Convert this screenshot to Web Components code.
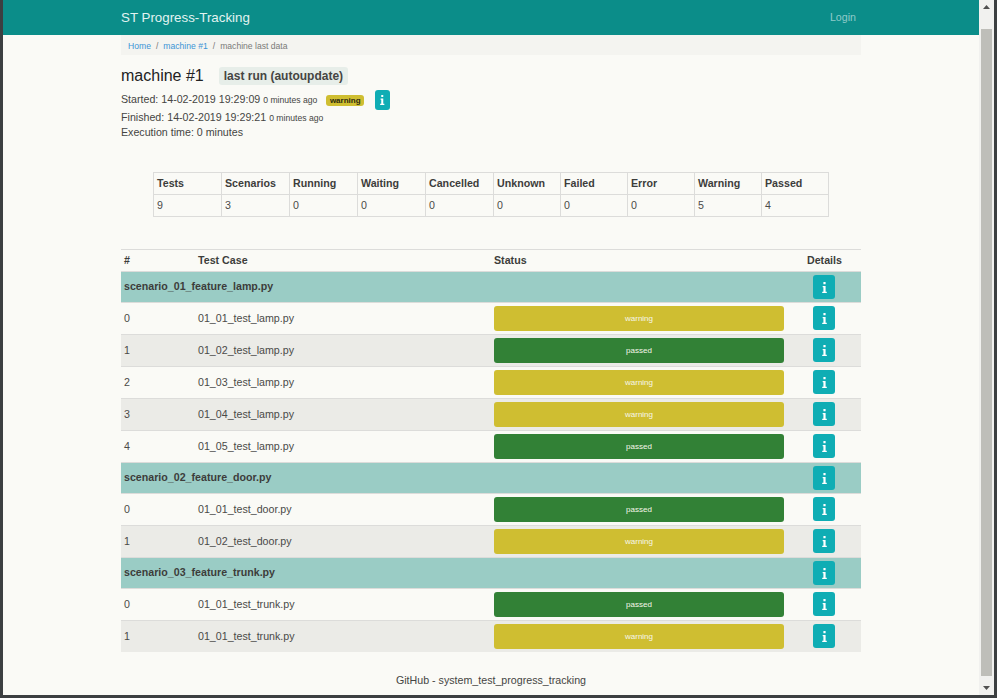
<!DOCTYPE html>
<html>
<head>
<meta charset="utf-8">
<title>ST Progress-Tracking</title>
<style>
html, body { margin: 0; height: 100%; overflow: hidden; }
body { background: #3c3f41; font-family: "Liberation Sans", Arial, sans-serif; color: #3a3a38; }
</style>
</head>
<body>
<st-window>
	<st-navbar brand="ST Progress-Tracking" login="Login"></st-navbar>
	<st-container>
		<st-breadcrumb></st-breadcrumb>
		<st-run-header></st-run-header>
		<st-summary></st-summary>
		<st-results></st-results>
		<st-footer>GitHub - system_test_progress_tracking</st-footer>
	</st-container>
</st-window>
<script>
const INFO_ICON = `<svg viewBox="0 0 5 12" aria-hidden="true"><path fill="#fff" d="M1.3 0h2.4v2.5H1.3zM.5 4.3h3.2v6.3H5V12H0v-1.4h1.3V5.7H.5z"/></svg>`;

class StWindow extends HTMLElement {
	constructor() {
		super();
		this.attachShadow({ mode: 'open' }).innerHTML = `<style>
:host { display: flex; height: 695px; margin: 0 3px; background: #fafaf6; }
main { flex: 1; min-width: 0; overflow: hidden; }
st-scrollbar { flex: none; }
</style><main><slot></slot></main><st-scrollbar></st-scrollbar>`;
	}
}

class StScrollbar extends HTMLElement {
	constructor() {
		super();
		this.attachShadow({ mode: 'open' }).innerHTML = `<style>
:host { display: flex; flex-direction: column; width: 15px; background: #f1f1ef; }
.arrow { height: 14px; display: flex; align-items: center; justify-content: center; }
.track { flex: 1; display: flex; padding: 15px 2px 5px; }
.thumb { flex: 1; background: #bebeb9; }
svg { display: block; }
</style>
<div class="arrow"><svg width="7" height="4"><path d="M3.5 0L7 4H0z" fill="#505050"/></svg></div>
<div class="track"><div class="thumb"></div></div>
<div class="arrow"><svg width="7" height="4"><path d="M0 0h7L3.5 4z" fill="#505050"/></svg></div>`;
	}
}

class StNavbar extends HTMLElement {
	constructor() {
		super();
		this.attachShadow({ mode: 'open' }).innerHTML = `<style>
:host { display: block; background: #0b8d89; height: 35px; }
nav { width: 740px; height: 100%; margin: 0 auto; display: flex; justify-content: space-between; align-items: center; }
.brand { font-size: 13.333px; color: #e2f3f1; }
.login { font-size: 10.667px; color: #8fcbc9; margin-right: 5px; padding-bottom: 2px; }
</style><nav><span class="brand"></span><span class="login"></span></nav>`;
		this.shadowRoot.querySelector('.brand').textContent = this.getAttribute('brand');
		this.shadowRoot.querySelector('.login').textContent = this.getAttribute('login');
	}
}

class StContainer extends HTMLElement {
	constructor() {
		super();
		this.attachShadow({ mode: 'open' }).innerHTML = `<style>
:host { display: block; width: 740px; margin: 0 auto; }
</style><slot></slot>`;
	}
}

class StBreadcrumb extends HTMLElement {
	constructor() {
		super();
		this.attachShadow({ mode: 'open' }).innerHTML = `<style>
:host { display: flex; align-items: center; box-sizing: border-box; height: 20px; padding: 1px 0 0 7px; background: #f4f4f0; font-size: 8.6px; color: #7a7a78; }
a { color: #3c94d6; text-decoration: none; }
i { font-style: normal; margin: 0 5px; }
</style><a>Home</a><i>/</i><a>machine #1</a><i>/</i><span>machine last data</span>`;
	}
}

class StInfoButton extends HTMLElement {
	constructor() {
		super();
		this.attachShadow({ mode: 'open' }).innerHTML = `<style>
:host { display: inline-flex; align-items: center; justify-content: center; width: 22px; height: 24px; background: #0fadb4; border-radius: 3px; }
:host([small]) { width: 15px; height: 20px; }
svg { display: block; width: 5px; height: 11px; }
:host([small]) svg { height: 10px; width: 4.5px; }
</style>${INFO_ICON}`;
	}
}

class StRunHeader extends HTMLElement {
	constructor() {
		super();
		this.attachShadow({ mode: 'open' }).innerHTML = `<style>
:host { display: block; font-size: 10.667px; color: #454543; height: 117px; }
.title { display: flex; align-items: center; padding-top: 12px; height: 18px; }
h1 { font-size: 16px; font-weight: 400; margin: 0 15px 0 0; color: #222; line-height: 18px; }
.tag { background: #e7eee9; border-radius: 3px; padding: 0 5px; font-size: 12px; font-weight: 700; line-height: 18px; color: #454543; }
.line { display: flex; align-items: center; height: 15px; }
.first { margin: 5px 0 -1px; height: 20px; align-items: flex-start; }
.first .txt { margin-top: 3px; }
small { font-size: 8.64px; }
.badge { background: #cfbe31; border-radius: 3px; color: #2d2a10; font-size: 8px; font-weight: 700; padding: 0 3.5px; margin: 5px 11px 0 9px; line-height: 11px; }
</style>
<div class="title"><h1>machine #1</h1><span class="tag">last run (autoupdate)</span></div>
<div class="line first"><span class="txt">Started: 14-02-2019 19:29:09 <small>0 minutes ago</small></span><span class="badge">warning</span><st-info-button small></st-info-button></div>
<div class="line"><span class="txt">Finished: 14-02-2019 19:29:21 <small>0 minutes ago</small></span></div>
<div class="line"><span class="txt">Execution time: 0 minutes</span></div>`;
	}
}

class StSummary extends HTMLElement {
	constructor() {
		super();
		const cols = [['Tests', 9], ['Scenarios', 3], ['Running', 0], ['Waiting', 0], ['Cancelled', 0], ['Unknown', 0], ['Failed', 0], ['Error', 0], ['Warning', 5], ['Passed', 4]];
		const head = cols.map(c => `<b>${c[0]}</b>`).join('');
		const vals = cols.map(c => `<span>${c[1]}</span>`).join('');
		this.attachShadow({ mode: 'open' }).innerHTML = `<style>
:host { display: block; height: 77px; padding-left: 32px; }
.grid { display: grid; width: 676px; grid-template-columns: 69px repeat(4, 68px) repeat(5, 67px); grid-template-rows: 23px 22px; font-size: 10.667px; }
b, span { display: flex; align-items: center; box-sizing: border-box; padding: 0 0 2px 3px; border-right: 1px solid #dcdcda; border-bottom: 1px solid #dcdcda; }
b { border-top: 1px solid #dcdcda; color: #3d3d3b; }
b:first-of-type, .grid > :nth-child(11) { border-left: 1px solid #dcdcda; }
span { color: #4a4a48; }
</style><div class="grid">${head}${vals}</div>`;
	}
}

class StScenarioRow extends HTMLElement {
	constructor() {
		super();
		this.attachShadow({ mode: 'open' }).innerHTML = `<style>
:host { display: flex; box-sizing: border-box; align-items: center; justify-content: space-between; height: 31px; padding: 0 26px 0 3px; background: #9accc5; background-clip: padding-box; border-top: 1px solid #dcdcda; font-size: 10.667px; font-weight: 700; color: #3d3d3b; }
.name { padding-bottom: 2px; }
</style><span class="name"><slot></slot></span><st-info-button></st-info-button>`;
	}
}

class StResultRow extends HTMLElement {
	constructor() {
		super();
		const state = this.getAttribute('state');
		this.attachShadow({ mode: 'open' }).innerHTML = `<style>
:host { display: grid; box-sizing: border-box; grid-template-columns: 77px 296px 290px 1fr; align-items: center; height: 32px; border-top: 1px solid #dcdcda; font-size: 10.667px; color: #4a4a48; }
:host([alt]) { background: #ebebe7; }
.cell { padding-bottom: 2px; }
.idx { padding-left: 3px; }
.bar { align-self: start; margin-top: 3px; height: 25px; border-radius: 3px; display: flex; align-items: center; justify-content: center; font-size: 8px; color: #f6f6ea; }
.warning { background: #cfbe31; }
.passed { background: #328136; }
.det { align-self: start; margin-top: 3px; display: flex; justify-content: flex-end; padding-right: 26px; }
</style>
<span class="cell idx">${this.getAttribute('idx')}</span>
<span class="cell">${this.getAttribute('name')}</span>
<div class="bar ${state}">${state}</div>
<div class="det"><st-info-button></st-info-button></div>`;
	}
}

class StResults extends HTMLElement {
	constructor() {
		super();
		const groups = [
			['scenario_01_feature_lamp.py', [['01_01_test_lamp.py', 'warning'], ['01_02_test_lamp.py', 'passed'], ['01_03_test_lamp.py', 'warning'], ['01_04_test_lamp.py', 'warning'], ['01_05_test_lamp.py', 'passed']]],
			['scenario_02_feature_door.py', [['01_01_test_door.py', 'passed'], ['01_02_test_door.py', 'warning']]],
			['scenario_03_feature_trunk.py', [['01_01_test_trunk.py', 'passed'], ['01_01_test_trunk.py', 'warning']]]
		];
		let rows = '';
		for(let g of groups) {
			rows += `<st-scenario-row>${g[0]}</st-scenario-row>`;
			g[1].forEach((t, i) => {
				rows += `<st-result-row idx="${i}" name="${t[0]}" state="${t[1]}"${i % 2 ? ' alt' : ''}></st-result-row>`;
			});
		}
		this.attachShadow({ mode: 'open' }).innerHTML = `<style>
:host { display: block; }
.head { display: grid; box-sizing: border-box; grid-template-columns: 77px 296px 313px 1fr; align-items: center; height: 22px; border-top: 1px solid #dcdcda; font-size: 10.667px; font-weight: 700; color: #3d3d3b; }
.head span { padding-bottom: 2px; }
.head span:first-child { padding-left: 3px; }
</style>
<div class="head"><span>#</span><span>Test Case</span><span>Status</span><span>Details</span></div>
${rows}`;
	}
}

class StFooter extends HTMLElement {
	constructor() {
		super();
		this.attachShadow({ mode: 'open' }).innerHTML = `<style>
:host { display: block; text-align: center; font-size: 10.667px; color: #454543; padding-top: 22px; }
</style><slot></slot>`;
	}
}

customElements.define('st-window', StWindow);
customElements.define('st-scrollbar', StScrollbar);
customElements.define('st-navbar', StNavbar);
customElements.define('st-container', StContainer);
customElements.define('st-breadcrumb', StBreadcrumb);
customElements.define('st-info-button', StInfoButton);
customElements.define('st-run-header', StRunHeader);
customElements.define('st-summary', StSummary);
customElements.define('st-scenario-row', StScenarioRow);
customElements.define('st-result-row', StResultRow);
customElements.define('st-results', StResults);
customElements.define('st-footer', StFooter);
</script>
</body>
</html>
